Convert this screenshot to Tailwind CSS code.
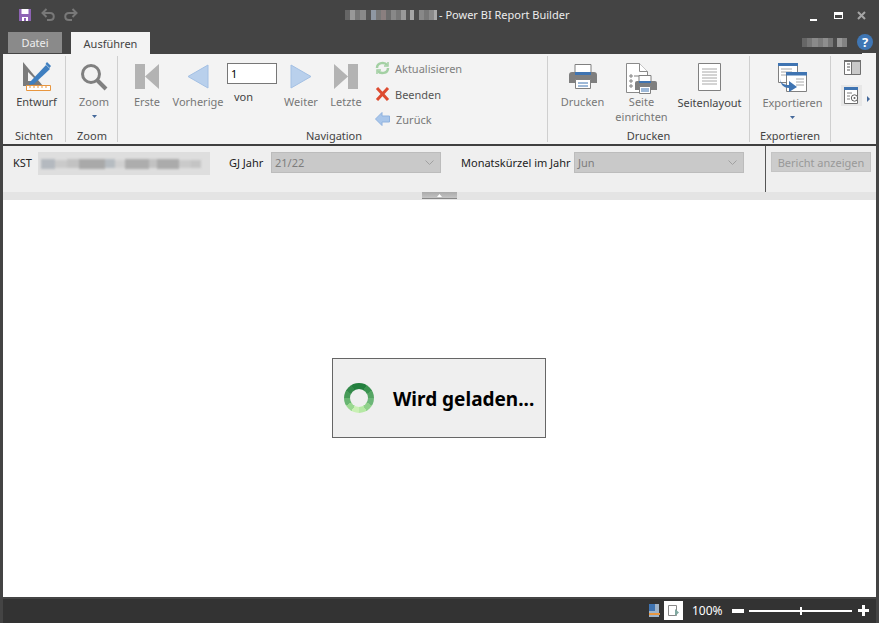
<!DOCTYPE html>
<html lang="de">
<head>
  <meta charset="UTF-8">
  <title>Power BI Report Builder</title>
  <script src="https://cdn.jsdelivr.net/npm/@tailwindcss/browser@4"></script>
</head>
<body class="bg-[#444444] font-['Noto_Sans',sans-serif] text-[11px] leading-none overflow-hidden">
<div class="w-[879px] h-[623px] flex flex-col relative">

  <!-- Titelleiste -->
  <div class="h-[32px] flex items-start shrink-0">
    <svg class="w-[12px] h-[12px] ml-[19px] mt-[9px]" viewBox="0 0 12 12">
      <path d="M0 0h12v12H0z" fill="#8e63b5"/><path d="M2.500 0h7v5h-7z" fill="#fff"/><path d="M3 8h6v4H3z" fill="#fff"/><path d="M5 9h2v3H5z" fill="#8e63b5"/>
    </svg>
    <svg class="w-[14px] h-[13px] ml-[10px] mt-[8px]" viewBox="0 0 14 13" fill="none" stroke="#787878" stroke-width="2">
      <path d="M5.500 1L1.500 5l4 4"/><path d="M1.500 5H9c5 0 5 7 0 7H6"/>
    </svg>
    <svg class="w-[14px] h-[13px] ml-[9px] mt-[8px]" viewBox="0 0 14 13" fill="none" stroke="#787878" stroke-width="2">
      <path d="M8.500 1l4 4-4 4"/><path d="M12.500 5H5c-5 0-5 7 0 7h3"/>
    </svg>
    <!-- verpixelter Name -->
    <div class="flex h-[10px] ml-[267px] mt-[10px]">
      <span class="w-[5px] bg-[#666]"></span><span class="w-[5px] bg-[#999]"></span><span class="w-[5px] bg-[#777]"></span><span class="w-[6px] bg-[#8a8a8a]"></span><span class="w-[5px] bg-[#555]"></span><span class="w-[5px] bg-[#8f98a3]"></span><span class="w-[5px] bg-[#777]"></span><span class="w-[5px] bg-[#8a7f7f]"></span><span class="w-[5px] bg-[#6c6c6c]"></span><span class="w-[5px] bg-[#888]"></span><span class="w-[5px] bg-[#777]"></span><span class="w-[5px] bg-[#9a9a9a]"></span><span class="w-[4px] bg-[#555]"></span><span class="w-[4px] bg-[#a5a5a5]"></span><span class="w-[5px] bg-[#4c4c4c]"></span><span class="w-[5px] bg-[#888]"></span><span class="w-[5px] bg-[#777]"></span><span class="w-[5px] bg-[#8a8a8a]"></span><span class="w-[3px] bg-[#aaa]"></span>
    </div>
    <span class="ml-[2px] mt-[8px] text-[#ececec] leading-[13px] whitespace-nowrap">- Power BI Report Builder</span>
    <div class="ml-auto flex items-start mr-[13px] mt-[11px]">
      <span class="w-[7px] h-[2px] bg-white mt-[8px]"></span>
      <span class="w-[9px] h-[7px] border border-white border-t-[3px] ml-[17px] mt-[1px]"></span>
      <svg class="w-[9px] h-[9px] ml-[14px]" viewBox="0 0 9 9" fill="none" stroke="#a5a5a5" stroke-width="2"><path d="M1 1l7 7M8 1L1 8"/></svg>
    </div>
  </div>

  <!-- Tabs -->
  <div class="h-[22px] flex items-start shrink-0 relative">
    <div class="ml-[8px] w-[54px] h-[21px] bg-[#8a8a8a] text-[#eeeeee] flex items-center justify-center">Datei</div>
    <div class="ml-[9px] w-[79px] h-[22px] bg-[#f3f3f3] text-[#444] flex items-center justify-center">Ausführen</div>
    <div class="ml-auto flex h-[9px] mt-[6px]">
      <span class="w-[5px] bg-[#666]"></span><span class="w-[5px] bg-[#777]"></span><span class="w-[6px] bg-[#8a8a8a]"></span><span class="w-[5px] bg-[#7c7c7c]"></span><span class="w-[5px] bg-[#8e8e8e]"></span><span class="w-[5px] bg-[#777]"></span><span class="w-[4px] bg-[#4c4c4c]"></span><span class="w-[5px] bg-[#999]"></span><span class="w-[5px] bg-[#828282]"></span>
    </div>
    <div class="w-[16px] h-[16px] rounded-full bg-[#3f76b4] text-white font-bold text-[13px] flex items-center justify-center ml-[10px] mr-[6px] mt-[2px]">?</div>
  </div>

  <!-- Ribbon -->
  <div class="mx-[3px] h-[90px] shrink-0 bg-[#f3f3f3] flex text-[#5f5f5f] relative">
    <span class="absolute right-0 -top-[1px] w-[14px] h-[1px] bg-[#f3f3f3]"></span>

    <!-- Sichten -->
    <div class="w-[63px] border-r border-[#cfcfcf] flex flex-col my-[2px]">
      <div class="h-[74px] flex flex-col items-center pt-[5px] pl-[5px]">
        <svg class="w-[30px] h-[30px]" viewBox="0 0 30 30">
          <path d="M1 1v24h20z" fill="#7a7a7a"/><path d="M6 11v9h9z" fill="#f3f3f3"/>
          <path d="M8 21L24 4l4 4-16 15-5 1z" fill="#3f7fc0"/><path d="M25 1l4 4-1.500 2-4-4z" fill="#3f7fc0"/>
          <path d="M4.500 24.500h24v5h-24z" fill="#fff" stroke="#e8963f"/><path d="M8 25v2M12 25v2M16 25v2M20 25v2M24 25v2" stroke="#e8963f"/>
        </svg>
        <span class="mt-[5px] text-[#444]">Entwurf</span>
      </div>
      <div class="text-center text-[#444]">Sichten</div>
    </div>

    <!-- Zoom -->
    <div class="w-[52px] border-r border-[#cfcfcf] flex flex-col my-[2px]">
      <div class="h-[74px] flex flex-col items-center pt-[7px] pl-[5px]">
        <svg class="w-[28px] h-[28px]" viewBox="0 0 28 28" fill="none" stroke="#808080">
          <circle cx="11" cy="11" r="8.500" stroke-width="3"/><path d="M17 17l9 9" stroke-width="4"/>
        </svg>
        <span class="mt-[5px] text-[#777]">Zoom</span>
        <svg class="w-[5px] h-[3px] mt-[8px]" viewBox="0 0 5 3"><path d="M0 0h5L2.500 3z" fill="#44689a"/></svg>
      </div>
      <div class="text-center text-[#444] pl-[1px]">Zoom</div>
    </div>

    <!-- Navigation -->
    <div class="w-[430px] border-r border-[#cfcfcf] flex flex-col my-[2px]">
      <div class="h-[74px] flex pl-[7px] text-[#777]">
        <div class="w-[44px] flex flex-col items-center pt-[8px]">
          <svg class="w-[24px] h-[25px]" viewBox="0 0 24 25" fill="#b3b3b3"><path d="M0 0h10v25H0zM10 12.500L24 0v25z"/></svg>
          <span class="mt-[7px]">Erste</span>
        </div>
        <div class="w-[58px] flex flex-col items-center pt-[8px]">
          <svg class="w-[22px] h-[25px]" viewBox="0 0 22 25"><path d="M21 1v23L1 12.500z" fill="#b9d0ec" stroke="#a3c0e4"/></svg>
          <span class="mt-[7px]">Vorherige</span>
        </div>
        <div class="w-[50px] flex flex-col pt-[7px]">
          <div class="w-[50px] h-[21px] border border-[#777] bg-white text-black flex items-center pl-[3px]">1</div>
          <span class="mt-[7px] ml-[7px] text-[#444]">von</span>
        </div>
        <div class="w-[48px] flex flex-col items-center pt-[8px]">
          <svg class="w-[22px] h-[25px]" viewBox="0 0 22 25"><path d="M1 1v23l20-11.500z" fill="#b9d0ec" stroke="#a3c0e4"/></svg>
          <span class="mt-[7px]">Weiter</span>
        </div>
        <div class="w-[42px] flex flex-col items-center pt-[8px]">
          <svg class="w-[24px] h-[25px]" viewBox="0 0 24 25" fill="#b3b3b3"><path d="M14 0h10v25H14zM14 12.500L0 0v25z"/></svg>
          <span class="mt-[7px]">Letzte</span>
        </div>
        <div class="ml-[8px] flex flex-col pt-[5px]">
          <div class="flex items-center h-[14px]">
            <svg class="w-[15px] h-[14px]" viewBox="0 0 15 14" fill="none" stroke="#a3d0a3" stroke-width="2.500"><path d="M2 7c0-6 8-6 10-3"/><path d="M13 7c0 6-8 6-10 3"/><path d="M13 1v4H9M2 13V9h4" stroke-width="1.500"/></svg>
            <span class="ml-[5px] text-[#808080]">Aktualisieren</span>
          </div>
          <div class="flex items-center h-[14px] mt-[12px]">
            <svg class="w-[15px] h-[14px]" viewBox="0 0 15 14" fill="none" stroke="#dd4b30" stroke-width="3"><path d="M2 1l11 12M13 1L2 13"/></svg>
            <span class="ml-[5px] text-[#555]">Beenden</span>
          </div>
          <div class="flex items-center h-[14px] mt-[11px]">
            <svg class="w-[15px] h-[14px]" viewBox="0 0 15 14"><path d="M.5 7L7 .500v3.500h7.500v6H7v3.500z" fill="#a9c6ea" stroke="#8fb2df"/></svg>
            <span class="ml-[6px] text-[#777]">Zurück</span>
          </div>
        </div>
      </div>
      <div class="text-center text-[#444] pl-[3px]">Navigation</div>
    </div>

    <!-- Drucken -->
    <div class="w-[202px] border-r border-[#cfcfcf] flex flex-col my-[2px]">
      <div class="h-[74px] flex text-[#777]">
        <div class="w-[69px] flex flex-col items-center pt-[8px]">
          <svg class="w-[28px] h-[25px]" viewBox="0 0 28 25">
            <path d="M6 .500h16v9H6z" fill="#fff" stroke="#808080"/><path d="M3 8h22a3 3 0 013 3v8H0v-8a3 3 0 013-3z" fill="#7f7f7f"/><path d="M6 8h16v3H6z" fill="#3f74b2"/><path d="M6.500 15.500h15v9h-15z" fill="#fff" stroke="#808080"/><path d="M9 19h10M9 22h10" stroke="#3f74b2"/>
          </svg>
          <span class="mt-[7px]">Drucken</span>
        </div>
        <div class="w-[49px] flex flex-col items-center pt-[7px]">
          <svg class="w-[31px] h-[31px]" viewBox="0 0 31 31">
            <path d="M.5.500h13l8 8v21H.500z" fill="#fff" stroke="#8a8a8a"/><path d="M13.500.500v8h8" fill="#fff" stroke="#8a8a8a"/>
            <path d="M4 12h2v2H4zM4 17h2v2H4zM4 22h2v2H4zM8 13h6" stroke="#808080" fill="none"/>
            <path d="M13 12.500h12v7H13z" fill="#fff" stroke="#808080"/><path d="M11 18h18a2 2 0 012 2v7H9v-7a2 2 0 012-2z" fill="#7f7f7f"/><path d="M13 18h12v2H13z" fill="#3f74b2"/><path d="M13.500 23.500h11v7h-11z" fill="#fff" stroke="#808080"/><path d="M15 26h8M15 28h8" stroke="#3f74b2"/>
          </svg>
          <span class="leading-[15px] text-center">Seite<br>einrichten</span>
        </div>
        <div class="ml-[12px] w-[63px] flex flex-col items-center pt-[7px]">
          <svg class="w-[24px] h-[29px]" viewBox="0 0 24 29" fill="none">
            <path d="M.5.500h22v27H.500z" fill="#fff" stroke="#808080"/><path d="M4 6h15M4 9h15M4 12h15M4 15h15M4 18h15M4 21h15" stroke="#a8a8a8"/>
          </svg>
          <span class="mt-[5px] text-[#444]">Seitenlayout</span>
        </div>
      </div>
      <div class="text-center text-[#444]">Drucken</div>
    </div>

    <!-- Exportieren -->
    <div class="w-[81px] border-r border-[#cfcfcf] flex flex-col my-[2px]">
      <div class="h-[74px] flex flex-col items-center pt-[7px] pl-[5px] text-[#777]">
        <svg class="w-[29px] h-[29px]" viewBox="0 0 29 29">
          <path d="M.5.500h19v19H.500z" fill="#fff" stroke="#808080"/><path d="M0 0h20v3H0z" fill="#3f74b2"/><path d="M3 6h11M3 9h11M3 12h6" stroke="#a8a8a8"/>
          <path d="M8.500 9.500h20v19h-20z" fill="#fff" stroke="#808080"/><path d="M8 9h21v3.500H8z" fill="#3f74b2"/><path d="M18 16h8M18 19h8M18 22h8" stroke="#a8a8a8"/>
          <path d="M2 14c0 6 3 8 9 8v-4l8 6-8 5v-4c-6 0-9-4-9-11z" fill="#3f74b2"/>
        </svg>
        <span class="mt-[5px]">Exportieren</span>
        <svg class="w-[5px] h-[3px] mt-[8px]" viewBox="0 0 5 3"><path d="M0 0h5L2.500 3z" fill="#44689a"/></svg>
      </div>
      <div class="text-center text-[#444]">Exportieren</div>
    </div>

    <!-- Weitere -->
    <div class="flex-1 flex flex-col pl-[10px] pt-[6px] relative">
      <svg class="w-[17px] h-[15px] ml-[3px]" viewBox="0 0 17 15">
        <path d="M.5.500h16v14H.500z" fill="#c9c9c9" stroke="#707070"/><path d="M1 1h6v13H1z" fill="#fff"/><path d="M3 4h3M3 7h3M3 10h3" stroke="#555"/><path d="M7.500 1v13" stroke="#707070"/><path d="M0 0h17v2H0z" fill="#707070"/>
      </svg>
      <div class="w-[21px] h-[21px] bg-[#e7e7e7] mt-[10px] flex items-center justify-center">
        <svg class="w-[15px] h-[17px]" viewBox="0 0 15 17">
          <path d="M.5.500h13v16H.500z" fill="#fff" stroke="#707070"/><path d="M0 0h14v3H0z" fill="#3f74b2"/><path d="M3 6h5M3 9h3M3 12h3" stroke="#808080"/><circle cx="10.500" cy="11" r="3.200" fill="#fff" stroke="#606060"/><circle cx="10.500" cy="11" r="1" fill="#606060"/>
        </svg>
      </div>
      <svg class="absolute left-[36px] top-[42px] w-[3px] h-[6px]" viewBox="0 0 3 6"><path d="M0 0l3 3-3 3z" fill="#44689a"/></svg>
    </div>
  </div>

  <!-- Parameterleiste -->
  <div class="mx-[3px] h-[2px] bg-[#3f3f3f] shrink-0"></div>
  <div class="mx-[3px] h-[46px] shrink-0 bg-[#efefef] flex text-[#222]">
    <div class="w-[763px] border-r border-[#555] flex items-start pt-[6px] shrink-0">
      <span class="ml-[10px] w-[25px] mt-[5px]">KST</span>
      <div class="w-[172px] h-[23px] bg-[#dedede] flex items-center px-[3px] overflow-hidden">
        <div class="flex items-center blur-[1px]">
          <span class="w-[14px] h-[10px] bg-[#b4b9bf]"></span><span class="w-[12px] h-[8px] bg-[#cacaca]"></span><span class="w-[12px] h-[9px] bg-[#c2c2c2]"></span><span class="w-[26px] h-[10px] bg-[#a9a9a9]"></span><span class="w-[10px] h-[9px] bg-[#b6bcc1]"></span><span class="w-[10px] h-[8px] bg-[#d0d0d0]"></span><span class="w-[24px] h-[10px] bg-[#adadad]"></span><span class="w-[8px] h-[9px] bg-[#c2c2c2]"></span><span class="w-[22px] h-[10px] bg-[#ababab]"></span><span class="w-[12px] h-[8px] bg-[#cacaca]"></span><span class="w-[10px] h-[8px] bg-[#c4c4c4]"></span>
        </div>
      </div>
      <span class="ml-[19px] w-[42px] mt-[5px]">GJ Jahr</span>
      <div class="w-[170px] h-[21px] bg-[#c9c9c9] border border-[#bcbcbc] flex items-center justify-between pl-[3px] pr-[4px] pb-[1px] text-[#7d7d7d]">
        <span>21/22</span>
        <svg class="w-[9px] h-[5px] mr-[2px]" viewBox="0 0 9 5" fill="none" stroke="#a0a0a0"><path d="M.5.500l4 4 4-4"/></svg>
      </div>
      <span class="ml-[20px] w-[113px] mt-[5px] whitespace-nowrap">Monatskürzel im Jahr</span>
      <div class="w-[170px] h-[21px] bg-[#c9c9c9] border border-[#bcbcbc] flex items-center justify-between pl-[3px] pr-[4px] pb-[1px] text-[#7d7d7d]">
        <span>Jun</span>
        <svg class="w-[9px] h-[5px] mr-[2px]" viewBox="0 0 9 5" fill="none" stroke="#a0a0a0"><path d="M.5.500l4 4 4-4"/></svg>
      </div>
    </div>
    <div class="pl-[5px] pt-[6px]">
      <div class="w-[100px] h-[20px] bg-[#cccccc] border border-[#c4c4c4] text-[#999] flex items-center justify-center">Bericht anzeigen</div>
    </div>
  </div>

  <!-- Splitter -->
  <div class="mx-[3px] h-[8px] shrink-0 bg-[#e4e4e4] flex justify-center">
    <div class="w-[35px] h-[7px] bg-gradient-to-b from-[#aaaaaa] to-[#c4c4c4] border-b border-[#888] flex items-center justify-center">
      <svg class="w-[5px] h-[3px]" viewBox="0 0 5 3"><path d="M0 3h5L2.500 0z" fill="#fff"/></svg>
    </div>
  </div>

  <!-- Berichtsbereich -->
  <div class="mx-[3px] flex-1 bg-white flex items-start justify-center">
    <div class="w-[214px] h-[80px] mt-[158px] mr-[1px] bg-[#efefef] border border-[#666] flex items-center pl-[11px]">
      <div class="w-[30px] h-[30px] rounded-full bg-[conic-gradient(#237f3e_0_30deg,#3b9350_30deg_60deg,#55a563_60deg_90deg,#6cb678_90deg_120deg,#8fd08a_120deg_150deg,#b5e8a4_150deg_180deg,#c9f0b4_180deg_210deg,#9ad890_210deg_240deg,#68b572_240deg_270deg,#479a58_270deg_300deg,#33894a_300deg_330deg,#237f3e_330deg_360deg)] flex items-center justify-center">
        <div class="w-[18px] h-[18px] rounded-full bg-[#efefef]"></div>
      </div>
      <span class="ml-[19px] mt-[3px] font-bold text-[19px] text-black whitespace-nowrap">Wird geladen...</span>
    </div>
  </div>

  <!-- Statusleiste -->
  <div class="h-[26px] shrink-0 flex flex-col">
    <div class="h-[2px] bg-[#444]"></div>
    <div class="flex-1 mx-[3px] bg-[#333333] flex items-center justify-end text-white pb-[1px]">
      <div class="w-[19px] h-[19px] flex items-center justify-center">
        <svg class="w-[11px] h-[13px]" viewBox="0 0 11 13"><path d="M0 0h10v13H0z" fill="#9fb3c8"/><path d="M0 0h6v7H0z" fill="#3f74b2"/><path d="M0 9h11v2H0z" fill="#e8963f"/></svg>
      </div>
      <div class="w-[19px] h-[19px] bg-white flex items-center justify-center">
        <svg class="w-[13px] h-[13px]" viewBox="0 0 13 13" fill="none"><path d="M1.500 1.500h8v10h-8z" stroke="#888"/><path d="M8 5l4 3.500L8 12z" fill="#7fa8a0"/></svg>
      </div>
      <span class="ml-[9px] text-[12px] w-[40px]">100%</span>
      <span class="w-[12px] h-[4px] bg-white"></span>
      <div class="w-[103px] h-[2px] bg-white ml-[5px] flex justify-center items-center">
        <span class="w-[2px] h-[8px] bg-white"></span>
      </div>
      <svg class="w-[11px] h-[11px] ml-[6px] mr-[7px]" viewBox="0 0 11 11"><path d="M4 0h3v4h4v3H7v4H4V7H0V4h4z" fill="#fff"/></svg>
    </div>
  </div>
</div>
</body>
</html>
